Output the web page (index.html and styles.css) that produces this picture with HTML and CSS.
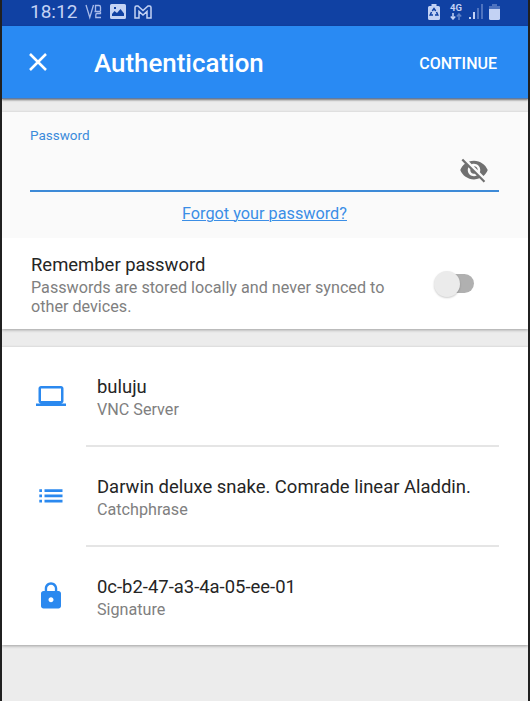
FILE: index.html
```html
<!DOCTYPE html>
<html lang="en">
<head>
<meta charset="utf-8">
<title>Authentication</title>
<link rel="stylesheet" href="styles.css">
</head>
<body>
<div class="screen">
  <div class="status">
    <span class="clock">18:12</span>
    <svg class="vnc" width="18" height="16" viewBox="0 0 18 16"><path d="M1 1 4.800 13.500 8.500 1M10.500 7V1.500H14Q15.500 1.500 15.500 3V7M9.500 7.500h6M15.500 7.500V9.500H12Q10.800 9.500 10.800 11v2.500H16"/></svg>
    <svg class="photo" width="16" height="15" viewBox="0 0 16 15"><path fill-rule="evenodd" d="M1.500 0h13Q16 0 16 1.500v12Q16 15 14.500 15h-13Q0 15 0 13.500v-12Q0 0 1.500 0ZM2 12h12V9.500L10.500 5 7 9 4.500 7 2 10ZM4 3v2h2V3Z"/></svg>
    <svg class="mail" width="18" height="14" viewBox="0 0 18 14"><path d="M1 13V2.500Q1 1 2.500 1H4l5 4.500L14 1h1.500Q17 1 17 2.500V13h-4V6.500L9 10 5 6.500V13Z"/></svg>
    <div class="status-right">
      <svg width="12" height="16" viewBox="0 0 12 16"><path class="fill" d="M3.500 0h5v2h2Q12 2 12 3.500v11Q12 16 10.500 16h-9Q0 16 0 14.500v-11Q0 2 1.500 2h2Z"/><path class="recycle" d="M4.300 7 6 4.500 7.700 7M8.500 8l1.300 3H7M5 11H2.200l1.300-3"/></svg>
      <div class="network"><span>4G</span><svg width="12" height="7" viewBox="0 0 12 7"><path class="down" d="M3 0v6M.8 3.500 3 6l2.200-2.500"/><path class="up" d="M9 7V1M6.800 3.500 9 1l2.200 2.500"/></svg></div>
      <svg class="signal" width="14" height="15" viewBox="0 0 14 15"><path class="fill" d="M0 13h2v2H0ZM4 8h2v7H4Z"/><path class="dim" d="M8 4h2v11H8ZM12 0h2v15h-2Z"/></svg>
      <svg class="battery" width="11" height="16" viewBox="0 0 11 16"><path class="dim" d="M3 0h5v2h3v3H0V2h3Z"/><path class="fill" d="M0 5h11v9.500Q11 16 9.500 16h-8Q0 16 0 14.500Z"/></svg>
    </div>
  </div>
  <header class="appbar">
    <svg class="close" width="18" height="18" viewBox="0 0 18 18"><path d="m1 1 16 16M17 1 1 17"/></svg>
    <h1>Authentication</h1>
    <span class="continue">CONTINUE</span>
  </header>
  <main>
    <section class="card password-card">
      <div class="password-panel">
        <label for="password">Password</label>
        <div class="field">
          <input id="password" type="password">
          <svg width="30" height="30" viewBox="0 0 24 24"><path d="M12 7c2.760 0 5 2.240 5 5 0 .65-.13 1.260-.36 1.830l2.920 2.920c1.510-1.260 2.700-2.890 3.430-4.750-1.730-4.390-6-7.500-11-7.500-1.400 0-2.740.25-3.980.7l2.160 2.160C10.740 7.130 11.350 7 12 7zM2 4.270l2.280 2.280.46.46C3.080 8.300 1.780 10.020 1 12c1.730 4.390 6 7.500 11 7.500 1.550 0 3.030-.3 4.380-.84l.42.42L19.730 22 21 20.730 3.270 3 2 4.270zM7.530 9.800l1.550 1.550c-.05.21-.08.430-.08.650 0 1.660 1.340 3 3 3 .22 0 .44-.03.65-.08l1.550 1.550c-.67.33-1.410.53-2.200.53-2.760 0-5-2.240-5-5 0-.79.2-1.530.53-2.200zm4.310-.78 3.150 3.150.02-.16c0-1.660-1.340-3-3-3l-.17.01z"/></svg>
        </div>
        <a class="forgot" href="#">Forgot your password?</a>
      </div>
      <div class="remember">
        <div class="copy">
          <div class="title">Remember password</div>
          <div class="sub remember-sub">Passwords are stored locally and never synced to<br>other devices.</div>
        </div>
        <div class="switch"><div class="knob"></div></div>
      </div>
    </section>
    <section class="card details">
      <div class="row">
        <svg class="icon" width="30" height="30" viewBox="0 0 24 24"><path d="M20 18c1.100 0 1.990-.9 1.990-2L22 6c0-1.100-.9-2-2-2H4c-1.100 0-2 .9-2 2v10c0 1.100.9 2 2 2H0v2h24v-2h-4zM4 6h16v10H4V6z"/></svg>
        <div class="info"><div class="title">buluju</div><div class="sub">VNC Server</div></div>
      </div>
      <div class="row">
        <svg class="icon" width="30" height="30" viewBox="0 0 30 30"><path d="M3.300 8.200H6V11H3.300zm5.200 0h18V11h-18zM3.300 13.500H6v2.800H3.300zm5.200 0h18v2.800h-18zM3.300 18.800H6v2.800H3.300zm5.200 0h18v2.800h-18z"/></svg>
        <div class="info"><div class="title">Darwin deluxe snake. Comrade linear Aladdin.</div><div class="sub">Catchphrase</div></div>
      </div>
      <div class="row">
        <svg class="icon" width="30" height="30" viewBox="0 0 24 24"><path d="M18 8h-1V6c0-2.760-2.240-5-5-5S7 3.240 7 6v2H6c-1.100 0-2 .9-2 2v10c0 1.100.9 2 2 2h12c1.100 0 2-.9 2-2V10c0-1.100-.9-2-2-2zm-6 9c-1.100 0-2-.9-2-2s.9-2 2-2 2 .9 2 2-.9 2-2 2zm3.100-9H8.900V6c0-1.710 1.390-3.100 3.100-3.100 1.710 0 3.100 1.390 3.100 3.100v2z"/></svg>
        <div class="info"><div class="title">0c-b2-47-a3-4a-05-ee-01</div><div class="sub">Signature</div></div>
      </div>
    </section>
  </main>
</div>
</body>
</html>
```
FILE: styles.css
```css
* { box-sizing: border-box; }
body { margin: 0; background: #202020; font-family: Roboto, sans-serif; }
.screen { height: 701px; margin: 0 2px; background: #ececec; overflow: hidden; }

.status { display: flex; height: 26px; padding: 0 28px; background: #1041a3; color: #c3d2f4; }
.clock { width: 56px; font-size: 19px; line-height: 24px; white-space: nowrap; }
.status svg { display: block; flex: none; fill: #c3d2f4; }
.status > svg { margin-top: 4px; }
.status .vnc { margin-left: -1px; fill: none; stroke: #a8bbea; stroke-width: 1.300; }
.photo { margin-left: 7px; }
.status .mail { margin-left: 8px; margin-top: 5px; fill: none; stroke: #c3d2f4; stroke-width: 1.500; }
.status-right { display: flex; align-items: flex-start; margin-left: auto; padding-top: 4px; }
.recycle { fill: none; stroke: #1041a3; stroke-width: 1.500; }
.network { display: flex; flex-direction: column; align-items: center; width: 12px; margin: -1px 7px 0 10px; font-size: 9.500px; font-weight: 700; line-height: 10px; }
.network path { fill: none; stroke: #c3d2f4; stroke-width: 1.500; }
.network .up { opacity: .45; }
.dim { opacity: .35; }
.signal { margin-right: 6px; }

.appbar { display: flex; align-items: center; position: relative; height: 73px; padding: 0 31px 0 27px; background: #298af3; color: #fff; border-bottom: 1px solid #607ba2; box-shadow: 0 1px 2px #0008; }
.close { display: block; fill: none; stroke: #fff; stroke-width: 2.500; }
h1 { margin: 1px 0 0 47px; font-size: 25.900px; font-weight: 500; line-height: 32px; }
.continue { margin: 2px 0 0 auto; font-size: 16px; font-weight: 500; }

.card { background: #fff; box-shadow: 0 1px 3px #0005; }
.password-card { height: 217px; margin-top: 13px; }
.password-panel { height: 126px; padding: 15px 29px 0 28px; background: #fafafa; }
label { display: block; height: 17px; color: #3c8bda; font-size: 13.500px; line-height: 16px; }
.field { display: flex; height: 48px; border-bottom: 2px solid #3d8ad7; }
input { flex: 1; min-width: 0; padding: 24px 0 0; border: 0; outline: 0; background: transparent; font: 18px Roboto, sans-serif; }
.field svg { flex: none; margin: 11px 10px 0 0; fill: #707070; }
.forgot { display: block; width: max-content; margin: 11px auto 0; color: #3b8ee6; font-size: 16.250px; line-height: 21px; text-underline-offset: 1px; text-decoration-thickness: 1px; }
.remember { display: flex; height: 91px; padding: 16px 54px 0 29px; justify-content: space-between; }
.title { color: #252525; font-size: 18.450px; line-height: 23px; white-space: nowrap; }
.sub { color: #808080; font-size: 16.160px; line-height: 20px; white-space: nowrap; }
.remember-sub { margin-top: 1px; line-height: 19px; }
.switch { display: flex; align-items: center; width: 35px; height: 19px; margin-top: 20px; background: #b0b0b0; border-radius: 10px; }
.knob { flex: none; width: 26px; height: 26px; margin-left: -5px; background: #ebebeb; border-radius: 50%; box-shadow: 0 1px 2px #0003; }

.details { height: 298px; margin-top: 18px; padding-right: 29px; }
.row { display: flex; height: 100px; padding-left: 34px; }
.icon { flex: none; margin-top: 34px; fill: #2b89ef; }
.info { flex: 1; margin-left: 20px; padding: 29px 0 0 11px; border-bottom: 2px solid #e5e5e5; }
.info .sub { margin-top: 1px; }
.row:last-child .info { border-bottom: 0; }
```
